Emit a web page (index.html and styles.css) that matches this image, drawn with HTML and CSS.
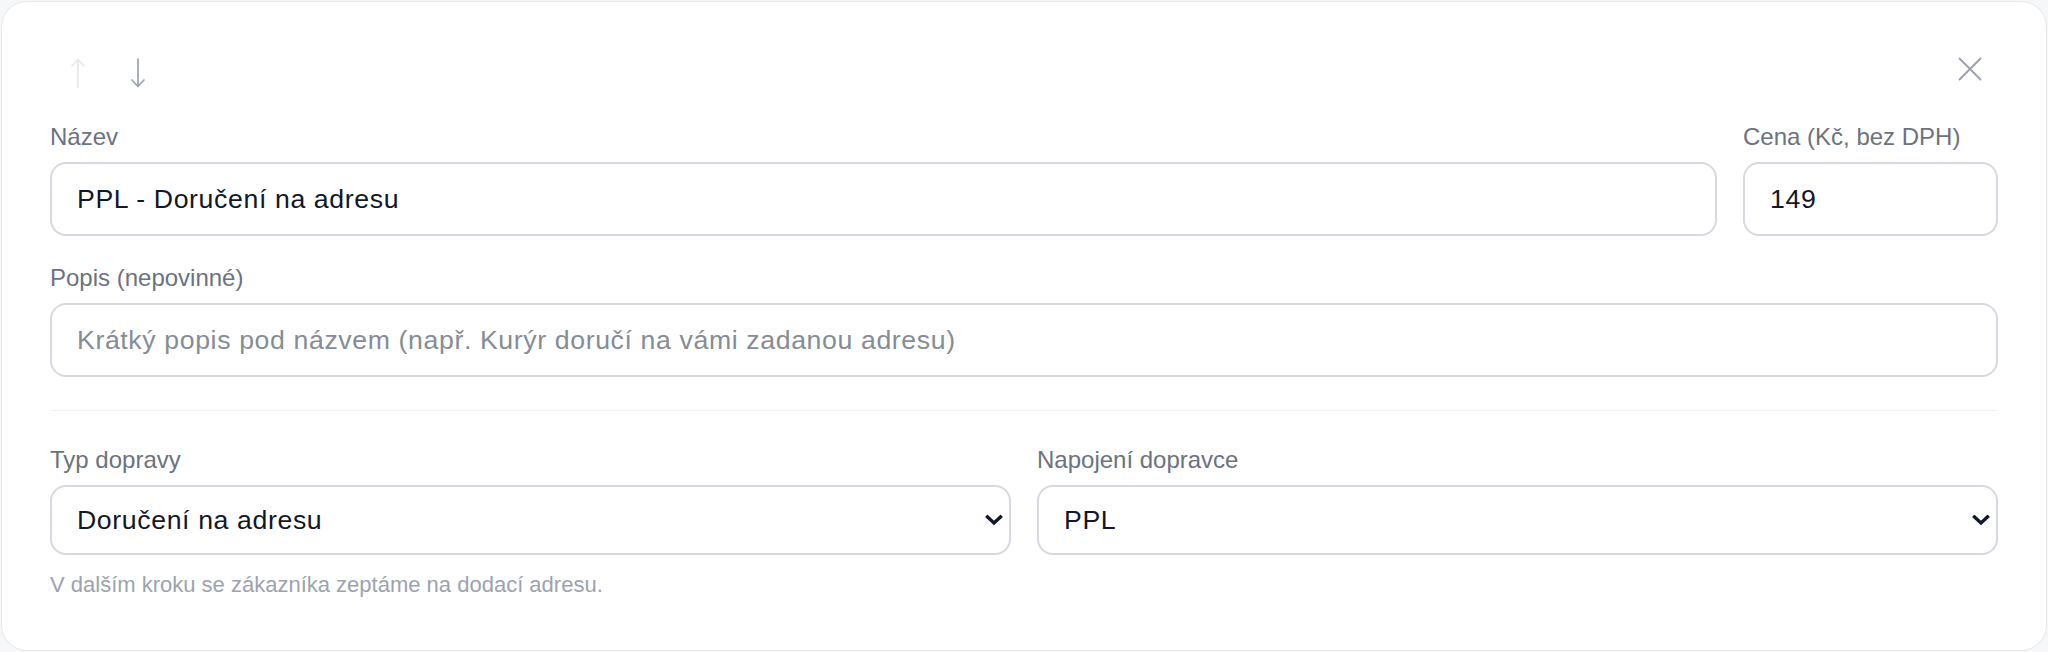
FILE: index.html
```html
<!DOCTYPE html>
<html lang="cs">
<head>
<meta charset="utf-8">
<title>Doprava</title>
<link rel="stylesheet" href="styles.css">
</head>
<body>
<div class="card">
  <div class="toolbar">
    <div class="order">
      <button class="icon-btn arrow disabled" type="button" aria-label="Posunout nahoru">
        <svg width="16" height="30" viewBox="0 0 16 30"><path d="M8 1.5V29M2 8L8 1.5L14 8" fill="none" stroke="currentColor" stroke-width="1.7" stroke-linecap="round" stroke-linejoin="round"/></svg>
      </button>
      <button class="icon-btn arrow" type="button" aria-label="Posunout dolů">
        <svg width="16" height="30" viewBox="0 0 16 30"><path d="M8 1V28.5M2 22L8 28.5L14 22" fill="none" stroke="currentColor" stroke-width="1.7" stroke-linecap="round" stroke-linejoin="round"/></svg>
      </button>
    </div>
    <button class="icon-btn close" type="button" aria-label="Zavřít">
      <svg width="24" height="24" viewBox="0 0 24 24"><path d="M1.5 1.5L22.5 22.5M22.5 1.5L1.5 22.5" fill="none" stroke="currentColor" stroke-width="2" stroke-linecap="round"/></svg>
    </button>
  </div>

  <div class="row">
    <div class="field grow">
      <label class="label">Název</label>
      <input class="input" type="text" value="PPL - Doručení na adresu">
    </div>
    <div class="field price">
      <label class="label">Cena (Kč, bez DPH)</label>
      <input class="input" type="text" value="149">
    </div>
  </div>

  <div class="field spaced">
    <label class="label">Popis (nepovinné)</label>
    <input class="input" type="text" placeholder="Krátký popis pod názvem (např. Kurýr doručí na vámi zadanou adresu)">
  </div>

  <div class="sep"></div>

  <div class="grid2">
    <div class="field">
      <label class="label">Typ dopravy</label>
      <div class="select-wrap">
        <select class="select"><option>Doručení na adresu</option></select>
        <svg class="chev" width="18" height="11" viewBox="0 0 18 11"><path d="M2.5 2.5L9 8.5L15.5 2.5" fill="none" stroke="currentColor" stroke-width="3.4" stroke-linecap="square"/></svg>
      </div>
    </div>
    <div class="field">
      <label class="label">Napojení dopravce</label>
      <div class="select-wrap">
        <select class="select"><option>PPL</option></select>
        <svg class="chev" width="18" height="11" viewBox="0 0 18 11"><path d="M2.5 2.5L9 8.5L15.5 2.5" fill="none" stroke="currentColor" stroke-width="3.4" stroke-linecap="square"/></svg>
      </div>
    </div>
  </div>

  <p class="help">V dalším kroku se zákazníka zeptáme na dodací adresu.</p>
</div>
</body>
</html>
```

FILE: styles.css
```css
* { box-sizing: border-box; }

html, body {
  margin: 0;
  padding: 0;
}

body {
  background: #f6f7f9;
  padding: 1px;
  font-family: "Liberation Sans", Arial, sans-serif;
  color: #111827;
}

.card {
  background: #ffffff;
  border: 1px solid #e5e7eb;
  border-radius: 26px;
  padding: 48px 48px 51px 48px;
}

.toolbar {
  display: flex;
  justify-content: space-between;
  align-items: flex-start;
  height: 45px;
  margin-bottom: 26px;
}

.order {
  display: flex;
  gap: 4px;
}

.icon-btn {
  border: 0;
  background: transparent;
  padding: 0;
  margin: 0;
  display: flex;
  align-items: center;
  justify-content: center;
  cursor: pointer;
}

.arrow {
  width: 56px;
  height: 45px;
  color: #9ca3af;
}

.arrow.disabled {
  color: #e5e7eb;
}

.close {
  width: 56px;
  height: 37px;
  color: #9ca3af;
}

.row {
  display: flex;
  gap: 26px;
}

.field {
  display: flex;
  flex-direction: column;
}

.grow { flex: 1; }

.price { width: 255px; }

.spaced { margin-top: 26px; }

.label {
  font-size: 24px;
  line-height: 32px;
  color: #6b7280;
  margin-bottom: 9px;
}

.input,
.select {
  width: 100%;
  height: 74px;
  border: 2px solid #d6d9df;
  border-radius: 16px;
  padding: 0 25px;
  font-family: "Liberation Sans", Arial, sans-serif;
  font-size: 26.67px;
  letter-spacing: 0.62px;
  color: #111827;
  background: #ffffff;
  outline: none;
}

.input::placeholder {
  color: #868c96;
}

.sep {
  height: 1px;
  background: #f1f2f4;
  margin: 33px 0 33px 0;
}

.grid2 {
  display: grid;
  grid-template-columns: 1fr 1fr;
  gap: 26px;
}

.select-wrap {
  position: relative;
}

.select {
  height: 70px;
  appearance: none;
  -webkit-appearance: none;
  padding-right: 50px;
}

.chev {
  position: absolute;
  right: 8px;
  top: 50%;
  transform: translateY(-50%);
  color: #111827;
  pointer-events: none;
}

.help {
  margin: 16px 0 0 0;
  font-size: 22px;
  line-height: 28px;
  color: #9ca3af;
}
```
